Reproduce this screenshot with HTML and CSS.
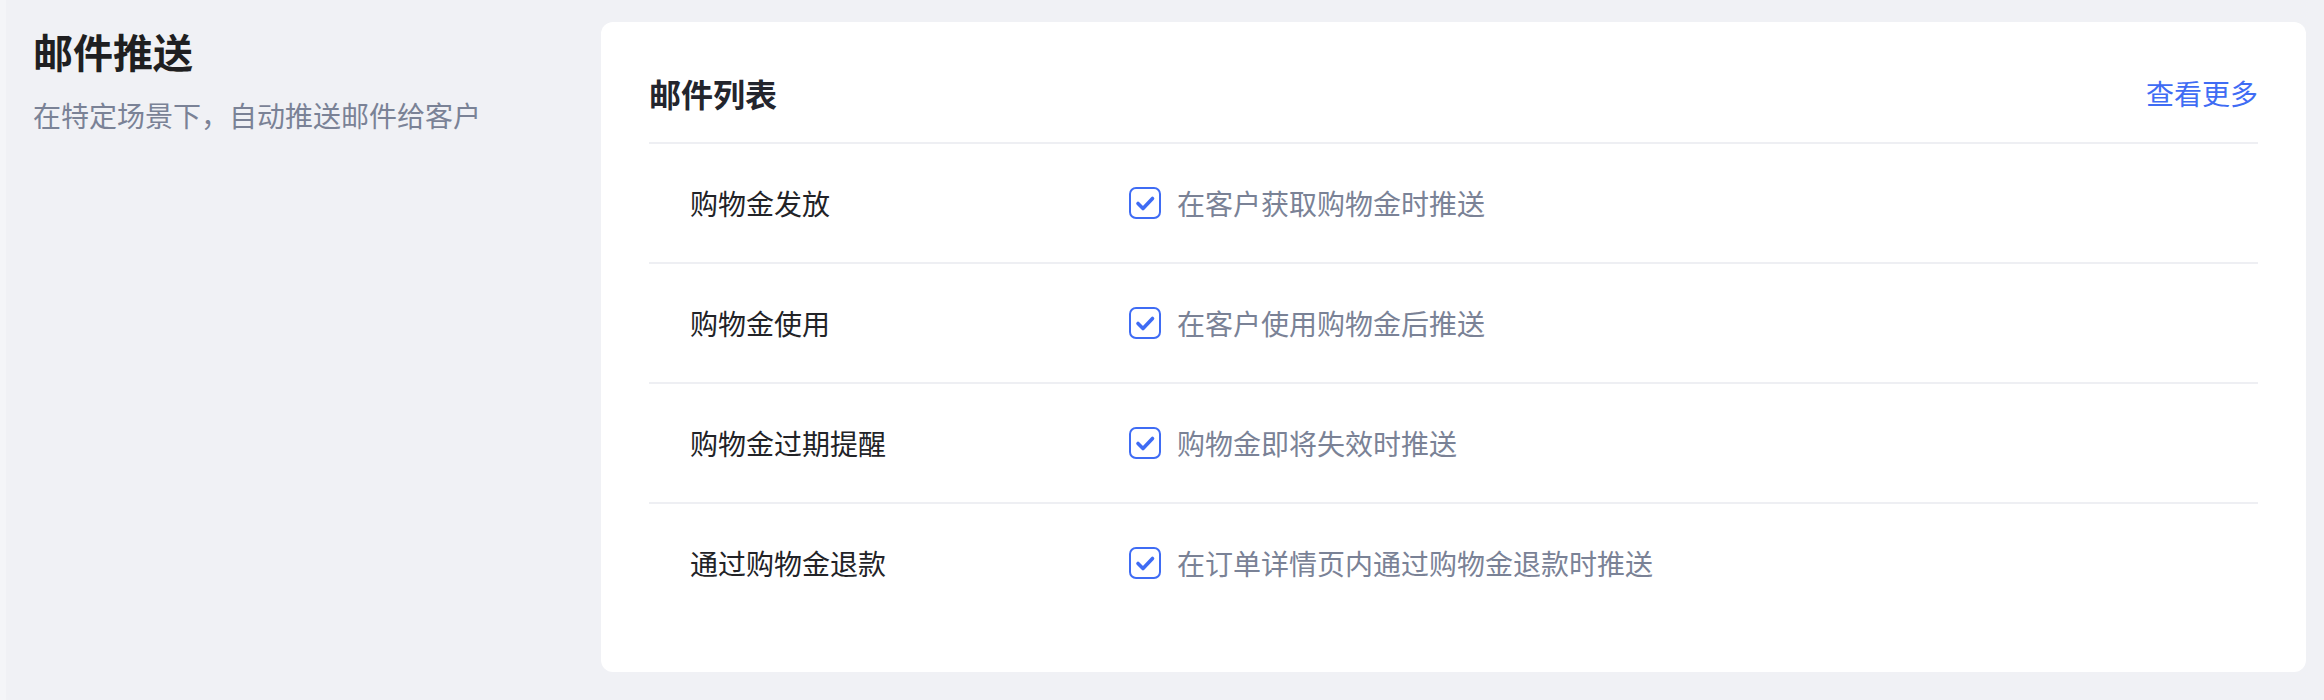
FILE: index.html
```html
<!DOCTYPE html>
<html lang="zh-CN">
<head>
<meta charset="utf-8">
<title>邮件推送</title>
<link rel="stylesheet" href="styles.css">
</head>
<body>
<div class="page">
  <aside class="intro">
    <h1 class="intro-title">邮件推送</h1>
    <p class="intro-desc">在特定场景下，自动推送邮件给客户</p>
  </aside>
  <section class="card">
    <header class="card-head">
      <h2 class="card-title">邮件列表</h2>
      <a class="more-link" href="#">查看更多</a>
    </header>
    <div class="row">
      <div class="row-label">购物金发放</div>
      <label class="check">
        <svg class="check-box" viewBox="0 0 32 32"><rect x="1" y="1" width="30" height="30" rx="6" fill="none" stroke="#3f6cf4" stroke-width="2"/><path d="M9 16.5 L14 21.5 L23.5 11.5" fill="none" stroke="#3f6cf4" stroke-width="3.6" stroke-linecap="round" stroke-linejoin="round"/></svg>
        <span class="check-text">在客户获取购物金时推送</span>
      </label>
    </div>
    <div class="row">
      <div class="row-label">购物金使用</div>
      <label class="check">
        <svg class="check-box" viewBox="0 0 32 32"><rect x="1" y="1" width="30" height="30" rx="6" fill="none" stroke="#3f6cf4" stroke-width="2"/><path d="M9 16.5 L14 21.5 L23.5 11.5" fill="none" stroke="#3f6cf4" stroke-width="3.6" stroke-linecap="round" stroke-linejoin="round"/></svg>
        <span class="check-text">在客户使用购物金后推送</span>
      </label>
    </div>
    <div class="row">
      <div class="row-label">购物金过期提醒</div>
      <label class="check">
        <svg class="check-box" viewBox="0 0 32 32"><rect x="1" y="1" width="30" height="30" rx="6" fill="none" stroke="#3f6cf4" stroke-width="2"/><path d="M9 16.5 L14 21.5 L23.5 11.5" fill="none" stroke="#3f6cf4" stroke-width="3.6" stroke-linecap="round" stroke-linejoin="round"/></svg>
        <span class="check-text">购物金即将失效时推送</span>
      </label>
    </div>
    <div class="row">
      <div class="row-label">通过购物金退款</div>
      <label class="check">
        <svg class="check-box" viewBox="0 0 32 32"><rect x="1" y="1" width="30" height="30" rx="6" fill="none" stroke="#3f6cf4" stroke-width="2"/><path d="M9 16.5 L14 21.5 L23.5 11.5" fill="none" stroke="#3f6cf4" stroke-width="3.6" stroke-linecap="round" stroke-linejoin="round"/></svg>
        <span class="check-text">在订单详情页内通过购物金退款时推送</span>
      </label>
    </div>
  </section>
</div>
</body>
</html>
```
FILE: styles.css
```css
html, body {
  margin: 0;
  padding: 0;
}
body {
  background: #f0f1f5;
  font-family: "PingFang SC", "Noto Sans CJK SC", "Noto Sans", sans-serif;
  color: #222327;
  border-left: 6px solid #f4f5f8;
  height: 700px;
  box-sizing: border-box;
}
.page {
  display: flex;
  align-items: flex-start;
  height: 100%;
}
.intro {
  width: 595px;
  flex: none;
  padding: 23px 0 0 27px;
  box-sizing: border-box;
}
.intro-title {
  margin: 0;
  font-size: 40px;
  line-height: 56px;
  font-weight: 700;
  color: #1f1f21;
}
.intro-desc {
  margin: 16px 0 0;
  font-size: 28px;
  line-height: 40px;
  color: #7a8296;
}
.card {
  flex: 1;
  margin: 22px 18px 0 0;
  height: 650px;
  box-sizing: border-box;
  background: #ffffff;
  border-radius: 12px;
  padding: 48px 48px 50px;
}
.card-head {
  display: flex;
  align-items: center;
  justify-content: space-between;
  height: 46px;
  padding-bottom: 26px;
}
.card-title {
  margin: 0;
  font-size: 32px;
  line-height: 46px;
  font-weight: 700;
  color: #23252d;
}
.more-link {
  font-size: 28px;
  line-height: 46px;
  color: #3f6cf4;
  text-decoration: none;
}
.row {
  display: flex;
  align-items: center;
  height: 118px;
  border-top: 2px solid #eeeff3;
}
.row-label {
  width: 480px;
  flex: none;
  box-sizing: border-box;
  padding-left: 41px;
  font-size: 28px;
  line-height: 40px;
  color: #222327;
}
.check {
  display: flex;
  align-items: center;
  gap: 16px;
}
.check-box {
  width: 32px;
  height: 32px;
  flex: none;
  display: block;
}
.check-text {
  font-size: 28px;
  line-height: 40px;
  color: #7a8296;
}
```
